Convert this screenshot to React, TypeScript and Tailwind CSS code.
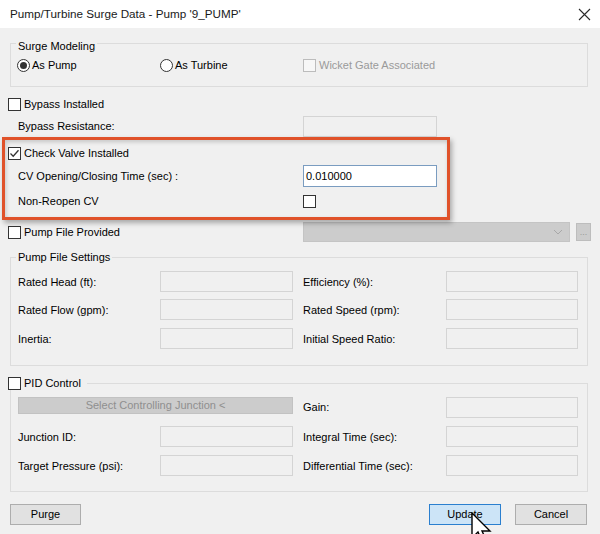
import React from 'react';

// Pump/Turbine surge data dialog

const CheckBox = ({ checked = false, disabled = false }: { checked?: boolean; disabled?: boolean }) => (
  <div
    className={
      'w-[13px] h-[13px] shrink-0 border flex items-center justify-center ' +
      (disabled ? 'border-[#bcbcbc] bg-[#f7f7f7]' : 'border-[#333333] bg-white')
    }
  >
    {checked && (
      <svg width="11" height="11" viewBox="0 0 11 11">
        <path d="M1.5 5.5 L4.2 8.2 L9.5 2.2" fill="none" stroke="#333333" strokeWidth="1.3" />
      </svg>
    )}
  </div>
);

const Radio = ({ checked = false }: { checked?: boolean }) => (
  <div className="w-[13px] h-[13px] shrink-0 rounded-full border border-[#333333] bg-white flex items-center justify-center">
    {checked && <div className="w-[7px] h-[7px] rounded-full bg-[#333333]" />}
  </div>
);

const TextBox = ({ width = 'w-[133px]', value = '' }: { width?: string; value?: string }) => (
  <div className={`${width} h-[21px] border border-[#d4d4d4] bg-[#f0f0f0]`}>{value}</div>
);

const FieldRow = ({ left, right }: { left: string; right: string }) => (
  <div className="flex items-center h-[21px]">
    <div className="w-[149px] pl-[7px] leading-[14px]">{left}</div>
    <TextBox />
    <div className="w-[153px] pl-[10px] leading-[14px]">{right}</div>
    <TextBox width="w-[132px]" />
  </div>
);

const App = () => {
  return (
    <div className="relative w-[600px] h-[534px] overflow-hidden bg-[#f0f0f0] text-[11px] text-black font-['Liberation_Sans',Arial,sans-serif]">
      {/* title bar */}
      <div className="h-[28px] bg-white flex items-center justify-between pl-[10px] pr-[9px]">
        <span className="text-[11.7px] text-[#1a1a1a]">Pump/Turbine Surge Data - Pump '9_PUMP'</span>
        <svg width="13" height="13" viewBox="0 0 13 13">
          <path d="M1 1 L12 12 M12 1 L1 12" stroke="#2b2b2b" strokeWidth="1.1" />
        </svg>
      </div>

      {/* surge modeling */}
      <div className="mt-[15px] ml-[10px] w-[578px] h-[44px] border border-[#dcdcdc]">
        <div className="-mt-[5px] ml-[5px] px-[2px] w-fit bg-[#f0f0f0] leading-[14px]">Surge Modeling</div>
        <div className="mt-[5px] flex items-center h-[14px] pl-[6px]">
          <div className="w-[143px] flex items-center gap-[2px]">
            <Radio checked />
            <span>As Pump</span>
          </div>
          <div className="w-[143px] flex items-center gap-[2px]">
            <Radio />
            <span>As Turbine</span>
          </div>
          <div className="flex items-center gap-[3px] text-[#9a9a9a]">
            <CheckBox disabled />
            <span>Wicket Gate Associated</span>
          </div>
        </div>
      </div>

      {/* bypass */}
      <div className="mt-[10px] pl-[8px] flex items-center gap-[3px] h-[14px]">
        <CheckBox />
        <span>Bypass Installed</span>
      </div>
      <div className="mt-[5px] flex items-center h-[21px]">
        <div className="w-[303px] pl-[18px]">Bypass Resistance:</div>
        <TextBox width="w-[134px]" />
      </div>

      {/* check valve */}
      <div className="mt-[9px] pl-[8px] flex items-center gap-[3px] h-[14px]">
        <CheckBox checked />
        <span>Check Valve Installed</span>
      </div>
      <div className="mt-[5px] flex items-center h-[22px]">
        <div className="w-[303px] pl-[18px]">CV Opening/Closing Time (sec) :</div>
        <div className="w-[134px] h-[22px] border border-[#7a9cc0] bg-white pl-[2px] flex items-center">0.010000</div>
      </div>
      <div className="mt-[7px] flex items-center h-[14px]">
        <div className="w-[303px] pl-[18px]">Non-Reopen CV</div>
        <CheckBox />
      </div>

      {/* pump file */}
      <div className="mt-[14px] flex items-center h-[20px]">
        <div className="w-[303px] pl-[8px] flex items-center gap-[3px]">
          <CheckBox />
          <span>Pump File Provided</span>
        </div>
        <div className="w-[267px] h-[20px] bg-[#cccccc] border border-[#c4c4c4] flex items-center justify-end pr-[6px]">
          <svg width="10" height="6" viewBox="0 0 10 6">
            <path d="M1 1 L5 5 L9 1" fill="none" stroke="#a8a8a8" strokeWidth="1" />
          </svg>
        </div>
        <div className="ml-[6px] w-[15px] h-[18px] bg-[#cccccc] border border-[#bdbdbd] flex items-end justify-center pb-[3px] text-[9px] leading-[9px] text-[#9a9a9a]">
          ...
        </div>
      </div>

      <div className="mt-[15px] ml-[10px] w-[578px] h-[109px] border border-[#dcdcdc]">
        <div className="-mt-[8px] ml-[5px] px-[2px] w-fit bg-[#f0f0f0] leading-[14px]">Pump File Settings</div>
        <div className="mt-[7px]">
          <FieldRow left="Rated Head (ft):" right="Efficiency (%):" />
        </div>
        <div className="mt-[7px]">
          <FieldRow left="Rated Flow (gpm):" right="Rated Speed (rpm):" />
        </div>
        <div className="mt-[8px]">
          <FieldRow left="Inertia:" right="Initial Speed Ratio:" />
        </div>
      </div>

      {/* PID control */}
      <div className="mt-[17px] ml-[10px] w-[578px] h-[109px] border border-[#dcdcdc]">
        <div className="-mt-[8px] -ml-[3px] pr-[6px] w-fit bg-[#f0f0f0] flex items-center gap-[3px] h-[14px]">
          <CheckBox />
          <span>PID Control</span>
        </div>
        <div className="mt-[7px] flex items-start h-[21px]">
          <div className="ml-[7px] w-[275px] h-[17px] bg-[#cccccc] border border-[#c2c2c2] flex items-center justify-center text-[#8f8f8f]">
            Select Controlling Junction &lt;
          </div>
          <div className="w-[153px] pl-[10px] self-center">Gain:</div>
          <TextBox width="w-[132px]" />
        </div>
        <div className="mt-[8px]">
          <FieldRow left="Junction ID:" right="Integral Time (sec):" />
        </div>
        <div className="mt-[8px]">
          <FieldRow left="Target Pressure (psi):" right="Differential Time (sec):" />
        </div>
      </div>

      {/* buttons */}
      <div className="mt-[12px] flex items-center h-[21px] pl-[10px]">
        <button className="w-[71px] h-[21px] bg-[#e1e1e1] border border-[#adadad] text-[11px]">Purge</button>
        <button className="ml-[348px] w-[72px] h-[21px] bg-[#cce4f7] border border-[#2a7fcf] text-[11px]">Update</button>
        <button className="ml-[14px] w-[72px] h-[21px] bg-[#e1e1e1] border border-[#adadad] text-[11px]">Cancel</button>
      </div>

      {/* highlight annotation */}
      <div className="absolute left-[2px] top-[137px] w-[448px] h-[83px] border-[3px] border-[#e0522a] shadow-[2px_3px_5px_rgba(0,0,0,0.3),inset_1px_2px_4px_rgba(0,0,0,0.18)]" />

      {/* mouse pointer */}
      <svg className="absolute left-[471px] top-[512px]" width="22" height="32" viewBox="0 0 22 32">
        <path d="M1 1 L1 26 L7 20 L11 29 L15 27.5 L11 19 L19 19 Z" fill="#ffffff" stroke="#000000" strokeWidth="1.4" strokeLinejoin="miter" />
      </svg>
    </div>
  );
};

export default App;
